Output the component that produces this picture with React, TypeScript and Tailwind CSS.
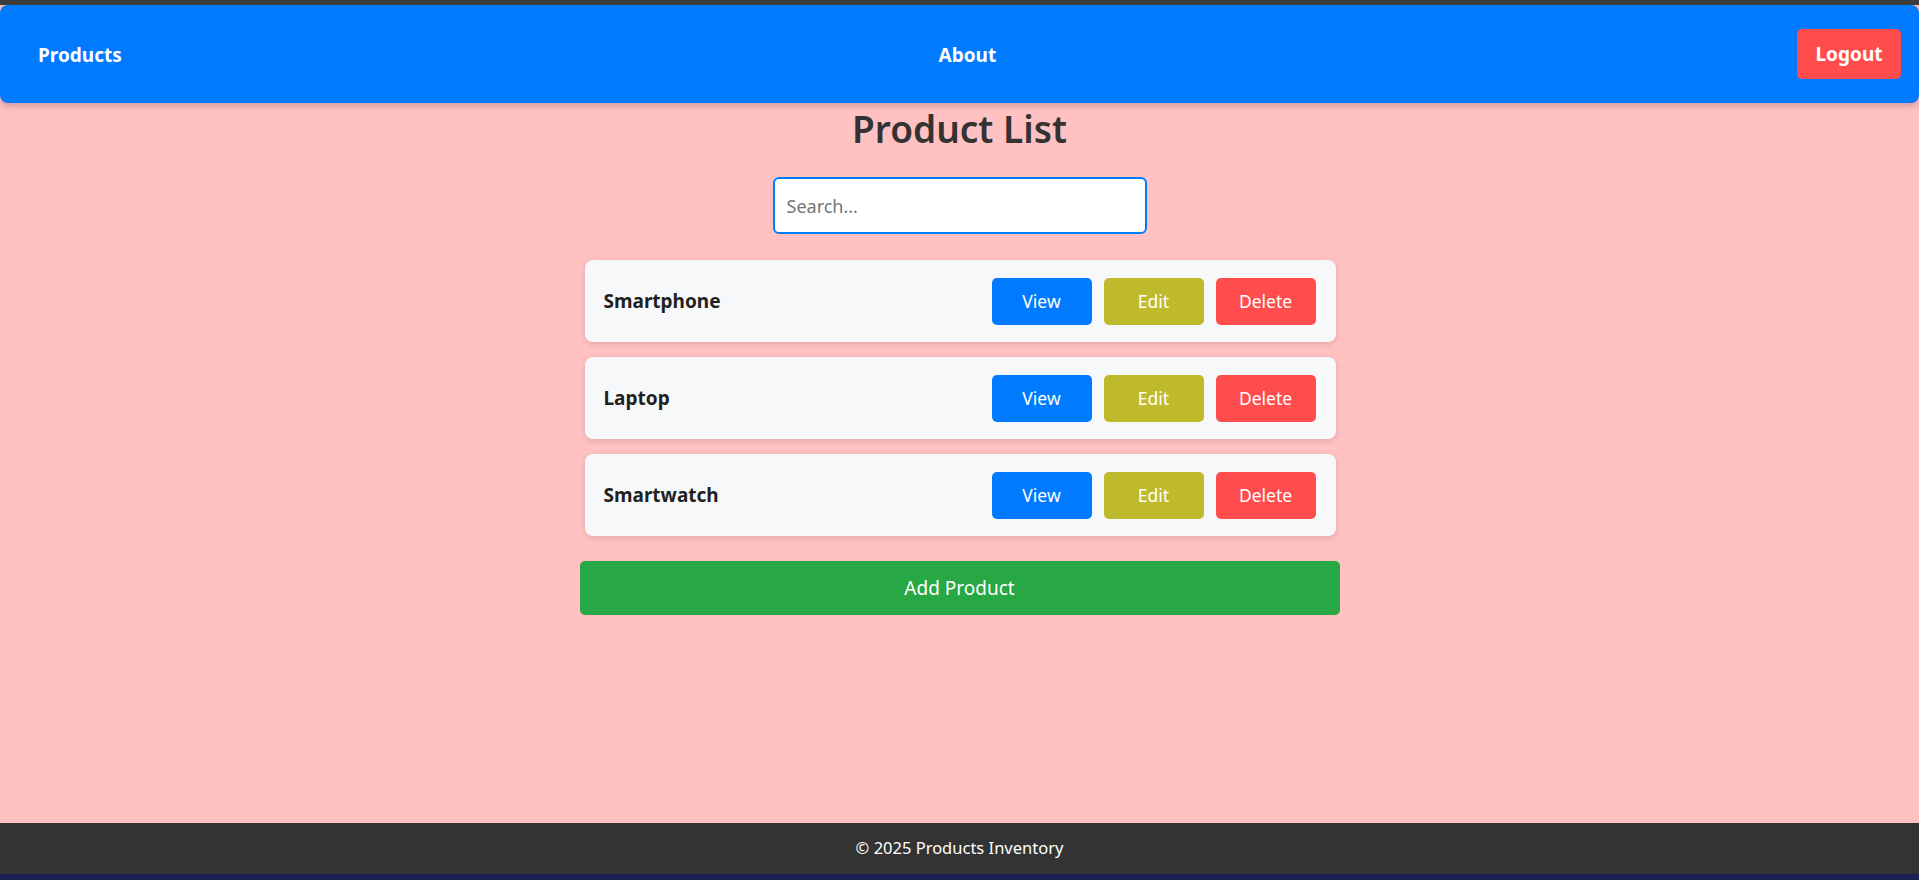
import React from "react";

const products = ["Smartphone", "Laptop", "Smartwatch"];

export default function App() {
  return (
    <div
      className="h-[880px] w-full flex flex-col bg-[#ffc1c1] overflow-hidden"
      style={{ fontFamily: '"Noto Sans", "Open Sans", sans-serif' }}
    >
      <div className="h-[5px] bg-[#3c3c3c] shrink-0" />
      <nav className="h-[98px] shrink-0 bg-[#007bff] rounded-[8px] shadow-[0_3px_6px_rgba(0,0,0,0.18)] flex items-center justify-between pl-[38px] pr-[18px] relative z-10">
        <span className="text-white font-bold text-[19px] leading-none pt-[2px]">Products</span>
        <span className="text-white font-bold text-[19px] leading-none pt-[2px] ml-[16px]">About</span>
        <button className="bg-[#ff4d4d] text-white font-bold text-[19px] w-[104px] h-[50px] rounded-[5px]">
          Logout
        </button>
      </nav>
      <main className="flex-1 flex flex-col items-center">
        <h1 className="text-[#333333] font-semibold text-[37px] leading-[48px] mt-[2px]">
          Product List
        </h1>
        <input
          className="mt-[24px] w-[374px] h-[57px] border-2 border-[#007bff] rounded-[6px] bg-white px-[12px] text-[18px] outline-none placeholder:text-[#757575]"
          placeholder="Search..."
        />
        <div className="w-[760px] mt-[26px] flex flex-col gap-[15px]">
          {products.map((p) => (
            <div
              key={p}
              className="ml-[5px] mr-[4px] h-[82px] bg-[#f7f8fa] rounded-[8px] shadow-[0_2px_6px_rgba(0,0,0,0.12)] flex items-center justify-between pl-[19px] pr-[20px]"
            >
              <span className="font-bold text-[19px] text-[#1f1f1f]">{p}</span>
              <div className="flex items-center gap-[12px]">
                <button className="w-[100px] h-[47px] rounded-[5px] bg-[#007bff] text-white text-[17.5px]">
                  View
                </button>
                <button className="w-[100px] h-[47px] rounded-[5px] bg-[#bfb92c] text-white text-[17.5px]">
                  Edit
                </button>
                <button className="w-[100px] h-[47px] rounded-[5px] bg-[#ff4d4d] text-white text-[17.5px]">
                  Delete
                </button>
              </div>
            </div>
          ))}
          <button className="mt-[10px] w-[760px] h-[54px] rounded-[5px] bg-[#28a745] text-white text-[19px]">
            Add Product
          </button>
        </div>
      </main>
      <footer className="h-[51px] shrink-0 bg-[#333333] flex items-center justify-center text-white text-[16.5px]">
        © 2025 Products Inventory
      </footer>
      <div className="h-[6px] shrink-0 bg-[#1b2150]" />
    </div>
  );
}
